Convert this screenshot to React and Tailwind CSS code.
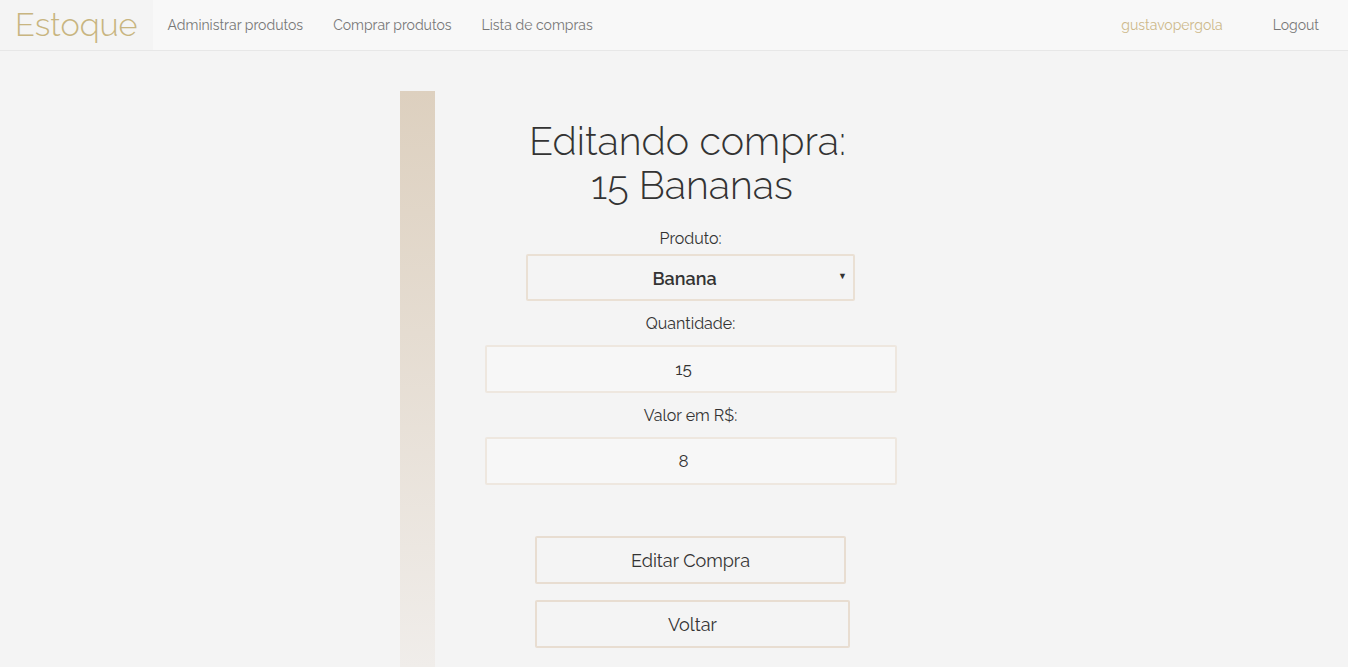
export default function App() {
  const font = { fontFamily: 'Raleway, Lato, "Open Sans", sans-serif' };
  return (
    <div className="min-h-[667px] bg-[#f4f4f4] text-[#333]" style={font}>
      <nav className="flex h-[51px] items-stretch border-b border-[#e7e7e7] bg-[#f8f8f8]">
        <div className="flex items-center bg-[#f4f4f4] px-[15px]">
          <span className="text-[32.5px] font-light leading-none text-[#c8b580]">Estoque</span>
        </div>
        <div className="flex items-center gap-[30px] pl-[15px] text-[14px] text-[#777]">
          <a>Administrar produtos</a>
          <a>Comprar produtos</a>
          <a>Lista de compras</a>
        </div>
        <div className="ml-auto flex items-center gap-[50px] pr-[29px] text-[14px]">
          <a className="text-[#cdb98a]">gustavopergola</a>
          <a className="text-[#777]">Logout</a>
        </div>
      </nav>
      <main className="flex justify-center pt-[40px]">
        <div className="flex w-[548px]">
          <div className="h-[576px] w-[35px] bg-gradient-to-b from-[#ddd0bf] to-[#f0edea]" />
          <div className="flex flex-1 flex-col items-center pr-[2px] pt-[28px]">
            <h1 className="flex flex-col items-center text-[39.5px] font-light leading-[44px] text-[#333]">
              <span className="pr-[6px]">Editando compra:</span>
              <span className="pl-[3px]">15 Bananas</span>
            </h1>
            <label className="mt-[21px] text-[16px] leading-[22px]">Produto:</label>
            <div className="relative mt-[4px] flex h-[47px] w-[329px] items-center justify-center rounded-[2px] border-2 border-[#eae0d4] bg-[#f4f4f4] pr-[12px]">
              <span className="mt-[2px] text-[18px] font-semibold text-[#333]">Banana</span>
              <span className="absolute right-[6px] top-[14px] text-[9px] text-[#333]">▼</span>
            </div>
            <label className="mt-[12px] text-[16px] leading-[22px]">Quantidade:</label>
            <div className="mt-[10px] flex h-[48px] w-[412px] items-center justify-center rounded-[2px] border-2 border-[#eee7df] bg-[#f7f7f7] pr-[14px] pt-[2px] text-[17px]">15</div>
            <label className="mt-[12px] text-[16px] leading-[22px]">Valor em R$:</label>
            <div className="mt-[10px] flex h-[48px] w-[412px] items-center justify-center rounded-[2px] border-2 border-[#eee7df] bg-[#f7f7f7] pr-[14px] pt-[2px] text-[17px]">8</div>
            <button className="mt-[51px] h-[48px] w-[311px] rounded-[2px] border-2 border-[#e8ddd1] text-[18px] text-[#333]">Editar Compra</button>
            <button className="ml-[4px] mt-[16px] h-[48px] w-[315px] rounded-[2px] border-2 border-[#e8ddd1] text-[18px] text-[#333]">Voltar</button>
          </div>
        </div>
      </main>
    </div>
  );
}
